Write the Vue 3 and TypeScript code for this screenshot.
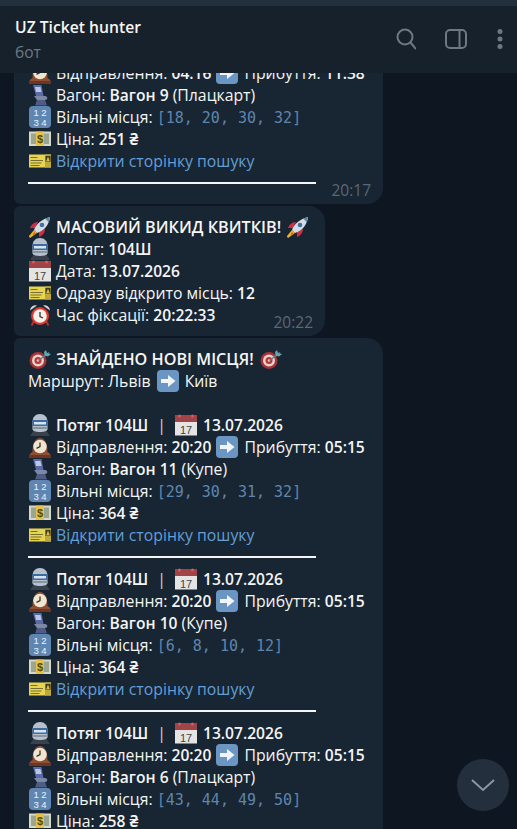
<template>
  <div class="window">
    <svg class="sprites" width="0" height="0">
      <defs>
        <symbol id="rocket" viewBox="0 0 22 22">
          <path d="M6 12 1 12c1-3 4-6 8-6z" fill="#cf2f45" />
          <path d="M10 16l0 5c3-1 6-4 6-8z" fill="#cf2f45" />
          <path d="M5 14C7 8 13 3 21 1c-1 8-6 14-13 16z" fill="#d5dde4" />
          <path d="M16 2.500 21 1l-1 5.500z" fill="#5f87ad" />
          <circle cx="13" cy="9" r="2.300" fill="#44719f" />
          <path d="M5 14l3 3-7 5c-1-1-1-2-1-2z" fill="#f4b02f" />
          <path d="M5 16l1.500 1.500-3 2z" fill="#e2502f" />
        </symbol>
        <symbol id="train" viewBox="0 0 22 22">
          <path d="M1 22l4-6h12l4 6z" fill="#39414d" />
          <path d="M3.500 8c0-5 3-8 7.500-8s7.500 3 7.500 8v7c0 2-3 3-7.500 3s-7.500-1-7.500-3z" fill="#b7c1cb" />
          <path d="M3.500 6h15v6h-15z" fill="#3d6ba3" />
          <path d="M5 8h12v2.500H5z" fill="#d9e3ec" />
          <path d="M3.500 13h15v2h-15z" fill="#8694a3" />
        </symbol>
        <symbol id="calendar" viewBox="0 0 22 22">
          <path d="M0 1h22v7H0z" fill="#a04448" />
          <path d="M0 8h22v13.500H0z" fill="#e4e4e4" />
          <circle cx="4.500" cy="2" r="1.500" fill="#d85a5e" />
          <circle cx="17.500" cy="2" r="1.500" fill="#d85a5e" />
          <text x="11" y="19.500" text-anchor="middle" class="cal-day">17</text>
        </symbol>
        <symbol id="ticket" viewBox="0 0 22 22">
          <path d="M0 4.500h22v13H0z" fill="#e6d452" />
          <path d="M16 4.500h6v13h-6z" fill="#bda93a" />
          <path d="M1.500 7h7v1h-7zM1.500 10h12.500v1H1.500zM1.500 12.500h11v1h-11zM1.500 15h9v1h-9z" fill="#76702e" />
          <path d="M16.500 6h5v6h-5z" fill="#3a3826" />
          <path d="M19 6.500l2 5h-4z" fill="#cdbb44" />
        </symbol>
        <symbol id="alarm" viewBox="0 0 22 22">
          <path d="M1 6.500a5.500 5.500 0 0 1 7-5zM21 6.500a5.500 5.500 0 0 0-7-5z" fill="#d8d8d8" />
          <path d="M5 17l-2.500 4.500M17 17l2.500 4.500" stroke="#b9302c" stroke-width="2" />
          <circle cx="11" cy="12" r="9" fill="#d83a34" />
          <circle cx="11" cy="12" r="6.800" fill="#f4f1e8" />
          <path d="M11 8v4.500l3 1.500" stroke="#333" stroke-width="1.300" fill="none" />
        </symbol>
        <symbol id="target" viewBox="0 0 22 22">
          <circle cx="9" cy="12.500" r="8.500" fill="#a8323a" />
          <circle cx="9" cy="12.500" r="6" fill="#e3d4c8" />
          <circle cx="9" cy="12.500" r="3.500" fill="#bf3439" />
          <circle cx="9" cy="12.500" r="1.200" fill="#e3d4c8" />
          <path d="M9.500 12.500 20 4.500" stroke="#5f7f8c" stroke-width="1.500" />
          <path d="M17 2l1 3 4 1-3 2.500-3.500-1-.5-3.500z" fill="#63a7ae" />
        </symbol>
        <symbol id="arrow" viewBox="0 0 22 22">
          <rect width="22" height="22" rx="4" fill="#6b96c4" />
          <path d="M4 9h7V5l7.500 6-7.500 6v-4H4z" fill="#f2f5f8" />
        </symbol>
        <symbol id="clock" viewBox="0 0 22 22">
          <path d="M0 22c0-3 1-5 3.500-6 0-9 3-14 7.500-14s7.500 5 7.500 14c2.500 1 3.500 3 3.500 6z" fill="#8f4f33" />
          <path d="M0 19h22v3H0z" fill="#6e3622" />
          <circle cx="11" cy="10.500" r="6.800" fill="#efe6d2" />
          <path d="M11 6.500v4l-3.500 1.800" stroke="#3a3028" stroke-width="1.300" fill="none" />
        </symbol>
        <symbol id="seat" viewBox="0 0 22 22">
          <path d="M4 1h8.500l2 11H7z" fill="#5b6aa8" />
          <path d="M6 3h5.500l1 5H7z" fill="#b9c6e4" />
          <path d="M5 12h11c3 0 3 4 0 4H8z" fill="#7c88a8" />
          <path d="M8 16h8l2 5.500H6z" fill="#4f5c84" />
        </symbol>
        <symbol id="numbers" viewBox="0 0 22 22">
          <rect width="22" height="22" rx="4" fill="#5f86b3" />
          <text x="11" y="10" text-anchor="middle" class="num">1 2</text>
          <text x="11" y="19.500" text-anchor="middle" class="num">3 4</text>
        </symbol>
        <symbol id="money" viewBox="0 0 22 22">
          <path d="M0 3.500h22v14.500H0z" fill="#d4d8ca" />
          <path d="M2 5.500h18v10.500H2z" fill="#9aa592" />
          <path d="M7 3.500h8v14.500H7z" fill="#e6c24a" />
          <text x="11" y="15" text-anchor="middle" class="dollar">$</text>
        </symbol>
      </defs>
    </svg>

    <header class="topbar">
      <div class="peer">
        <div class="peer-name">UZ Ticket hunter</div>
        <div class="peer-status">бот</div>
      </div>
      <div class="actions">
        <svg class="action" width="22" height="22" viewBox="0 0 22 22">
          <circle cx="11" cy="9" r="7.500" />
          <path d="M16.500 14.500 22 21" />
        </svg>
        <svg class="action" width="22" height="22" viewBox="0 0 22 22">
          <rect x="1" y="2" width="20" height="18" rx="4" />
          <path d="M14.500 2v18" />
        </svg>
        <svg class="dots" width="8" height="22" viewBox="0 0 8 22">
          <circle cx="4" cy="3.500" r="2.500" />
          <circle cx="4" cy="11" r="2.500" />
          <circle cx="4" cy="18.500" r="2.500" />
        </svg>
      </div>
    </header>

    <main class="history">
      <div class="list">
        <article class="bubble wide first">
          <div class="row"><svg class="em"><use href="#clock" /></svg>Відправлення: <b>{{ earlier.dep }}</b><svg class="em mid"><use href="#arrow" /></svg>Прибуття: <b>{{ earlier.arr }}</b></div>
          <div class="row"><svg class="em"><use href="#seat" /></svg>Вагон: <b>Вагон {{ earlier.carriage }}</b> ({{ earlier.kind }})</div>
          <div class="row"><svg class="em"><use href="#numbers" /></svg>Вільні місця: <code>{{ earlier.seats }}</code></div>
          <div class="row"><svg class="em"><use href="#money" /></svg>Ціна: <b>{{ earlier.price }} ₴</b></div>
          <div class="row"><svg class="em"><use href="#ticket" /></svg><a class="link">Відкрити сторінку пошуку</a></div>
          <div class="rule"></div>
          <span class="time">20:17</span>
        </article>

        <article class="bubble narrow middle">
          <div class="row"><svg class="em"><use href="#rocket" /></svg><b class="caps">МАСОВИЙ ВИКИД КВИТКІВ!</b><svg class="em after"><use href="#rocket" /></svg></div>
          <div class="row"><svg class="em"><use href="#train" /></svg>Потяг: <b>104Ш</b></div>
          <div class="row"><svg class="em"><use href="#calendar" /></svg>Дата: <b>13.07.2026</b></div>
          <div class="row"><svg class="em"><use href="#ticket" /></svg>Одразу відкрито місць: <b>12</b></div>
          <div class="row"><svg class="em"><use href="#alarm" /></svg>Час фіксації: <b>20:22:33</b></div>
          <span class="time">20:22</span>
        </article>

        <article class="bubble wide last">
          <div class="row"><svg class="em"><use href="#target" /></svg><b class="caps">ЗНАЙДЕНО НОВІ МІСЦЯ!</b><svg class="em after"><use href="#target" /></svg></div>
          <div class="row">Маршрут: Львів <svg class="em route"><use href="#arrow" /></svg>Київ</div>
          <div class="row"></div>
          <section v-for="t in tickets" :key="t.carriage" class="ticket">
            <div class="row"><svg class="em"><use href="#train" /></svg><b>Потяг {{ t.train }}</b><span class="sep">|</span><svg class="em cal"><use href="#calendar" /></svg><b>{{ t.date }}</b></div>
            <div class="row"><svg class="em"><use href="#clock" /></svg>Відправлення: <b>{{ t.dep }}</b><svg class="em mid"><use href="#arrow" /></svg>Прибуття: <b>{{ t.arr }}</b></div>
            <div class="row"><svg class="em"><use href="#seat" /></svg>Вагон: <b>Вагон {{ t.carriage }}</b> ({{ t.kind }})</div>
            <div class="row"><svg class="em"><use href="#numbers" /></svg>Вільні місця: <code>{{ t.seats }}</code></div>
            <div class="row"><svg class="em"><use href="#money" /></svg>Ціна: <b>{{ t.price }} ₴</b></div>
            <div class="row"><svg class="em"><use href="#ticket" /></svg><a class="link">Відкрити сторінку пошуку</a></div>
            <div class="rule"></div>
          </section>
        </article>
      </div>

      <button class="to-bottom" type="button">
        <svg width="26" height="16" viewBox="0 0 26 16">
          <path d="M2 3l11 10L24 3" />
        </svg>
      </button>
    </main>
  </div>
</template>

<script setup lang="ts">
interface Ticket {
  train: string
  date: string
  dep: string
  arr: string
  carriage: number
  kind: string
  seats: string
  price: number
}

const base = { train: '104Ш', date: '13.07.2026' }

const earlier: Ticket = { ...base, dep: '04:16', arr: '11:38', carriage: 9, kind: 'Плацкарт', seats: '[18, 20, 30, 32]', price: 251 }

const tickets: Ticket[] = [
  { ...base, dep: '20:20', arr: '05:15', carriage: 11, kind: 'Купе', seats: '[29, 30, 31, 32]', price: 364 },
  { ...base, dep: '20:20', arr: '05:15', carriage: 10, kind: 'Купе', seats: '[6, 8, 10, 12]', price: 364 },
  { ...base, dep: '20:20', arr: '05:15', carriage: 6, kind: 'Плацкарт', seats: '[43, 44, 49, 50]', price: 258 }
]
</script>

<style>
html,
body {
  margin: 0;
  background: #0e1621;
}
</style>

<style scoped>
.window {
  width: 517px;
  height: 829px;
  display: flex;
  flex-direction: column;
  overflow: hidden;
  background: #0e1621;
  color: #f5f5f5;
  font-family: "Open Sans", "Noto Sans", sans-serif;
  font-size: 15.8px;
}

.sprites {
  position: absolute;
}

.topbar {
  flex: none;
  height: 67px;
  margin-top: 6px;
  padding: 0 13px 0 15px;
  display: flex;
  align-items: center;
  justify-content: space-between;
  background: #17212b;
  box-shadow: 0 -6px 0 #242f3d;
  z-index: 1;
}

.peer {
  margin-top: -1px;
}

.peer-name {
  font-size: 15.7px;
  font-weight: 600;
  line-height: 22px;
}

.peer-status {
  margin-top: 4px;
  font-size: 15.5px;
  line-height: 20px;
  color: #6d7883;
}

.actions {
  display: flex;
  align-items: center;
  gap: 29px;
  margin-top: -1px;
}

.action {
  fill: none;
  stroke: #6d7883;
  stroke-width: 2;
}

.dots {
  fill: #6d7883;
}

.history {
  flex: 1;
  position: relative;
  overflow: hidden;
}

.list {
  display: flex;
  flex-direction: column;
  gap: 2px;
  margin: -21px 0 0 14px;
}

.bubble {
  position: relative;
  box-sizing: border-box;
  padding: 10px 0 10px 14px;
  background: #182533;
  border-radius: 16px;
  line-height: 22px;
}

.first {
  border-bottom-left-radius: 6px;
}

.middle {
  border-top-left-radius: 6px;
  border-bottom-left-radius: 6px;
}

.last {
  border-top-left-radius: 6px;
}

.wide {
  width: 369px;
}

.narrow {
  width: 311px;
}

.row {
  height: 22px;
  white-space: nowrap;
}

.em {
  width: 22px;
  height: 22px;
  margin: 0 5px 0 1px;
  vertical-align: top;
}

.em.after {
  margin: 0 0 0 6px;
}

.em.mid {
  margin: 0 6px 0 5px;
}

.em.route {
  margin: 0 6px 0 2px;
}

.em.cal {
  margin: 0 6px 0 0;
}

.sep {
  margin: 0 9px;
  color: #d5d8db;
}

b {
  font-size: 15.6px;
  font-weight: 600;
}

b.caps {
  font-size: 16.2px;
}

code {
  font-family: "DejaVu Sans Mono", monospace;
  font-size: 15px;
  color: #5f85ad;
}

.link {
  color: #639fd6;
}

.rule {
  height: 22px;
  width: 288px;
  box-sizing: border-box;
  border-bottom: 2px solid #f5f5f5;
  transform: translateY(-10px);
}

.time {
  position: absolute;
  right: 12px;
  bottom: 4px;
  font-size: 15.5px;
  line-height: 20px;
  color: #5b6875;
}

.to-bottom {
  position: absolute;
  right: 8px;
  bottom: 18px;
  width: 52px;
  height: 52px;
  padding: 0;
  border: 0;
  border-radius: 50%;
  background: #242f3d;
  display: flex;
  align-items: center;
  justify-content: center;
}

.to-bottom path {
  fill: none;
  stroke: #8b96a1;
  stroke-width: 2;
}

.cal-day {
  font: 11px "Liberation Sans", sans-serif;
  fill: #444;
}

.num {
  font: 9.500px "Liberation Sans", sans-serif;
  fill: #eef2f6;
}

.dollar {
  font: bold 11px "Liberation Sans", sans-serif;
  fill: #5a4a10;
}
</style>
